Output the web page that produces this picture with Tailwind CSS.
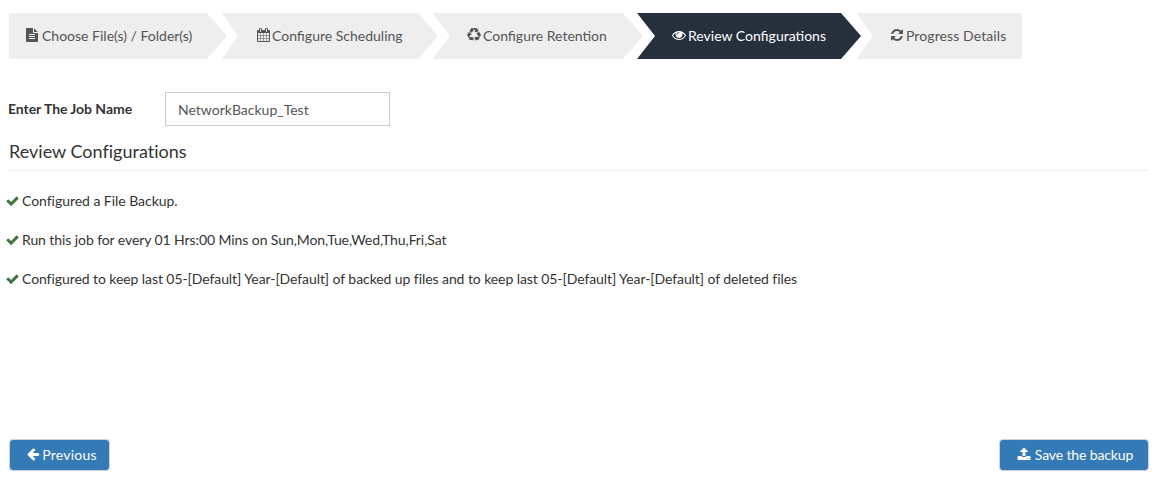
<!DOCTYPE html>
<html lang="en">
<head>
  <meta charset="UTF-8">
  <title>Review Configurations</title>
  <script src="https://cdn.jsdelivr.net/npm/@tailwindcss/browser@4"></script>
</head>
<body class="bg-white text-[#333] font-['Lato','Noto_Sans',sans-serif] text-[14px] overflow-hidden">
<div class="h-[477px] flex flex-col pl-[9px] pr-[12px] pt-[13px] pb-[6px]">

  <!-- wizard steps -->
  <div class="flex h-[46px] text-[#555]">
    <div class="w-[218px] flex items-center pl-[17px] pb-[2px] gap-[4px] bg-[#eee] rounded-l-[3px] [clip-path:polygon(0_0,198px_0,218px_23px,198px_46px,0_46px)]">
      <svg class="w-[12px] h-[14px] shrink-0" viewBox="128 0 1536 1792" fill="currentColor"><path d="M1596 476q14 14 28 36h-472v-472q22 14 36 28zm-476 164h544v1056q0 40-28 68t-68 28h-1344q-40 0-68-28t-28-68v-1600q0-40 28-68t68-28h800v544q0 40 28 68t68 28zm160 736v-64q0-14-9-23t-23-9h-704q-14 0-23 9t-9 23v64q0 14 9 23t23 9h704q14 0 23-9t9-23zm0-256v-64q0-14-9-23t-23-9h-704q-14 0-23 9t-9 23v64q0 14 9 23t23 9h704q14 0 23-9t9-23zm0-256v-64q0-14-9-23t-23-9h-704q-14 0-23 9t-9 23v64q0 14 9 23t23 9h704q14 0 23-9t9-23z"/></svg>
      <span>Choose File(s) / Folder(s)</span>
    </div>
    <div class="w-[216px] -ml-[5px] flex items-center pl-[35px] pb-[2px] gap-[2px] bg-[#eee] [clip-path:polygon(0_0,196px_0,216px_23px,196px_46px,0_46px,16px_23px)]">
      <svg class="w-[13px] h-[14px] shrink-0" viewBox="64 0 1664 1792" fill="currentColor"><path d="M192 1664h288v-288h-288v288zm352 0h320v-288h-320v288zm-352-352h288v-320h-288v320zm352 0h320v-320h-320v320zm-352-384h288v-288h-288v288zm736 736h320v-288h-320v288zm-384-736h320v-288h-320v288zm768 736h288v-288h-288v288zm-384-352h320v-320h-320v320zm-352-864v-288q0-13-9.5-22.5t-22.5-9.5h-64q-13 0-22.5 9.5t-9.5 22.5v288q0 13 9.5 22.5t22.5 9.5h64q13 0 22.5-9.5t9.5-22.5zm736 864h288v-320h-288v320zm-384-384h320v-288h-320v288zm384 0h288v-288h-288v288zm32-480v-288q0-13-9.5-22.5t-22.5-9.5h-64q-13 0-22.5 9.5t-9.5 22.5v288q0 13 9.5 22.5t22.5 9.5h64q13 0 22.5-9.5t9.5-22.5zm384-64v1280q0 52-38 90t-90 38h-1408q-52 0-90-38t-38-90v-1280q0-52 38-90t90-38h128v-96q0-66 47-113t113-47h64q66 0 113 47t47 113v96h384v-96q0-66 47-113t113-47h64q66 0 113 47t47 113v96h128q52 0 90 38t38 90z"/></svg>
      <span>Configure Scheduling</span>
    </div>
    <div class="w-[211px] -ml-[6px] flex items-center pl-[35px] pb-[2px] gap-[2px] bg-[#eee] [clip-path:polygon(0_0,191px_0,211px_23px,191px_46px,0_46px,18px_23px)]">
      <svg class="w-[14px] h-[14px] shrink-0" viewBox="0 0 1792 1792" fill="currentColor"><path d="M836 1169l-15 368-2 22-420-29q-36-3-67-31.5t-47-65.5q-11-27-14.5-55t4-65 12-55 21.5-64 19-53q78 12 509 28zm-387-586l180 379-147-92q-63 72-111.5 144.5t-72.5 125-39.5 94.5-18.5 63l-4 21-190-357q-17-26-18-56t6-47l8-18q35-63 114-188l-140-86zm1231 517l-188 359q-12 29-36.5 46.5t-43.5 20.5l-18 4q-71 7-219 12l8 164-230-367 211-362 7 173q170 16 283 5t170-33zm-785-924q-47 63-265 435l-317-187-19-12 225-356q20-31 60-45t80-10q24 2 48.5 12t42 21 41.5 33 36 34.5 36 39.5 32 35zm655 307l212 363q18 37 12.5 76t-27.5 74q-13 20-33 37t-38 28-48.5 22-47 16-51.5 14-46 12q-34-72-265-436l313-195zm-143-226l142-83-220 373-419-20 151-86q-34-89-75-166t-75.5-123.5-64.5-80-47-46.5l-17-13 405 1q31-3 58 10.5t39 28.5l11 15q39 61 112 190z"/></svg>
      <span>Configure Retention</span>
    </div>
    <div class="w-[224px] -ml-[6px] flex items-center pl-[35px] pb-[2px] gap-[2px] bg-[#26303d] text-white [clip-path:polygon(0_0,204px_0,224px_23px,204px_46px,0_46px,18px_23px)]">
      <svg class="w-[14px] h-[14px] shrink-0" viewBox="0 0 1792 1792" fill="currentColor"><path d="M1664 960q-152-236-381-353 61 104 61 225 0 185-131.5 316.5t-316.5 131.5-316.5-131.5-131.5-316.5q0-121 61-225-229 117-381 353 133 205 333.5 326.5t434.5 121.5 434.5-121.5 333.5-326.5zm-720-384q0-20-14-34t-34-14q-125 0-214.5 89.5t-89.5 214.5q0 20 14 34t34 14 34-14 14-34q0-86 61-147t147-61q20 0 34-14t14-34zm848 384q0 34-20 69-140 230-376.5 368.5t-499.5 138.5-499.5-139-376.5-368q-20-35-20-69t20-69q140-229 376.5-368t499.5-139 499.5 139 376.5 368q20 35 20 69z"/></svg>
      <span>Review Configurations</span>
    </div>
    <div class="w-[166px] -ml-[5px] flex items-center pl-[35px] pb-[2px] gap-[3px] bg-[#eee] rounded-r-[3px] [clip-path:polygon(0_0,100%_0,100%_100%,0_46px,17px_23px)]">
      <svg class="w-[12px] h-[14px] shrink-0" viewBox="128 0 1536 1792" fill="currentColor"><path d="M1639 1056q0 5-1 7-64 268-268 434.5t-478 166.5q-146 0-282.5-55t-243.5-157l-129 129q-19 19-45 19t-45-19-19-45v-448q0-26 19-45t45-19h448q26 0 45 19t19 45-19 45l-137 137q71 66 161 102t187 36q134 0 250-65t186-179q11-17 53-117 8-23 30-23h192q13 0 22.5 9.5t9.5 22.5zm25-800v448q0 26-19 45t-45 19h-448q-26 0-45-19t-19-45 19-45l138-138q-148-137-349-137-134 0-250 65t-186 179q-11 17-53 117-8 23-30 23h-199q-13 0-22.5-9.5t-9.5-22.5v-7q65-268 270-434.5t480-166.5q146 0 284 55.5t245 156.5l130-129q19-19 45-19t45 19 19 45z"/></svg>
      <span class="tracking-[0.1px]">Progress Details</span>
    </div>
  </div>

  <!-- job name -->
  <div class="flex items-center mt-[33px] -ml-[1px]">
    <label class="w-[157px] pb-[2px] font-bold tracking-[-0.05px]">Enter The Job Name</label>
    <input class="w-[225px] h-[34px] px-[12px] border border-[#ccc] text-[#555] bg-white outline-none" value="NetworkBackup_Test">
  </div>

  <h4 class="text-[18px] leading-[20px] mt-[15px] tracking-[0.01px]">Review Configurations</h4>
  <hr class="border-[#eee] mt-[9px]">

  <!-- summary -->
  <div class="mt-[20px] flex flex-col gap-[19px] -ml-[3px] leading-[20px]">
    <p class="flex items-center gap-[3px]">
      <svg class="w-[13px] h-[14px] shrink-0 text-[#3c763d]" viewBox="121 0 1550 1792" fill="currentColor"><path d="M1671 566q0 40-28 68l-724 724-136 136q-28 28-68 28t-68-28l-136-136-362-362q-28-28-28-68t28-68l136-136q28-28 68-28t68 28l294 295 656-657q28-28 68-28t68 28l136 136q28 28 28 68z"/></svg>
      <span class="tracking-[-0.04px]">Configured a File Backup.</span>
    </p>
    <p class="flex items-center gap-[3px]">
      <svg class="w-[13px] h-[14px] shrink-0 text-[#3c763d]" viewBox="121 0 1550 1792" fill="currentColor"><path d="M1671 566q0 40-28 68l-724 724-136 136q-28 28-68 28t-68-28l-136-136-362-362q-28-28-28-68t28-68l136-136q28-28 68-28t68 28l294 295 656-657q28-28 68-28t68 28l136 136q28 28 28 68z"/></svg>
      <span class="tracking-[-0.085px]">Run this job for every 01 Hrs:00 Mins on Sun,Mon,Tue,Wed,Thu,Fri,Sat</span>
    </p>
    <p class="flex items-center gap-[3px]">
      <svg class="w-[13px] h-[14px] shrink-0 text-[#3c763d]" viewBox="121 0 1550 1792" fill="currentColor"><path d="M1671 566q0 40-28 68l-724 724-136 136q-28 28-68 28t-68-28l-136-136-362-362q-28-28-28-68t28-68l136-136q28-28 68-28t68 28l294 295 656-657q28-28 68-28t68 28l136 136q28 28 28 68z"/></svg>
      <span class="tracking-[-0.077px]">Configured to keep last 05-[Default] Year-[Default] of backed up files and to keep last 05-[Default] Year-[Default] of deleted files</span>
    </p>
  </div>

  <!-- buttons -->
  <div class="mt-auto flex justify-between">
    <button class="h-[32px] w-[101px] pl-[5px] pb-[2px] flex items-center justify-center gap-[3px] rounded-[4px] bg-[#337ab7] border border-[#ccd5dd] text-white">
      <svg class="w-[12px] h-[14px] shrink-0" viewBox="128 0 1536 1792" fill="currentColor"><path d="M1664 896v128q0 53-32.5 90.5t-84.5 37.5h-704l293 294q38 36 38 90t-38 90l-75 76q-37 37-90 37-52 0-91-37l-651-652q-37-37-37-90 0-52 37-91l651-650q38-38 91-38 52 0 90 38l75 74q38 38 38 91t-38 91l-293 293h704q52 0 84.5 37.5t32.5 90.5z"/></svg>
      <span class="tracking-[0.2px]">Previous</span>
    </button>
    <button class="h-[32px] w-[150px] pl-[2px] pb-[2px] flex items-center justify-center gap-[4px] rounded-[4px] bg-[#337ab7] border border-[#ccd5dd] text-white">
      <svg class="w-[14px] h-[14px] shrink-0" viewBox="0 0 1792 1792" fill="currentColor"><path d="M1344 1472q0-26-19-45t-45-19-45 19-19 45 19 45 45 19 45-19 19-45zm256 0q0-26-19-45t-45-19-45 19-19 45 19 45 45 19 45-19 19-45zm128-224v320q0 40-28 68t-68 28h-1472q-40 0-68-28t-28-68v-320q0-40 28-68t68-28h427q21 56 70.5 92t110.5 36h256q61 0 110.5-36t70.5-92h427q40 0 68 28t28 68zm-325-648q-17 40-59 40h-256v448q0 26-19 45t-45 19h-256q-26 0-45-19t-19-45v-448h-256q-42 0-59-40-17-39 14-69l448-448q18-19 45-19t45 19l448 448q31 30 14 69z"/></svg>
      <span class="tracking-[-0.13px]">Save the backup</span>
    </button>
  </div>
</div>
</body>
</html>
